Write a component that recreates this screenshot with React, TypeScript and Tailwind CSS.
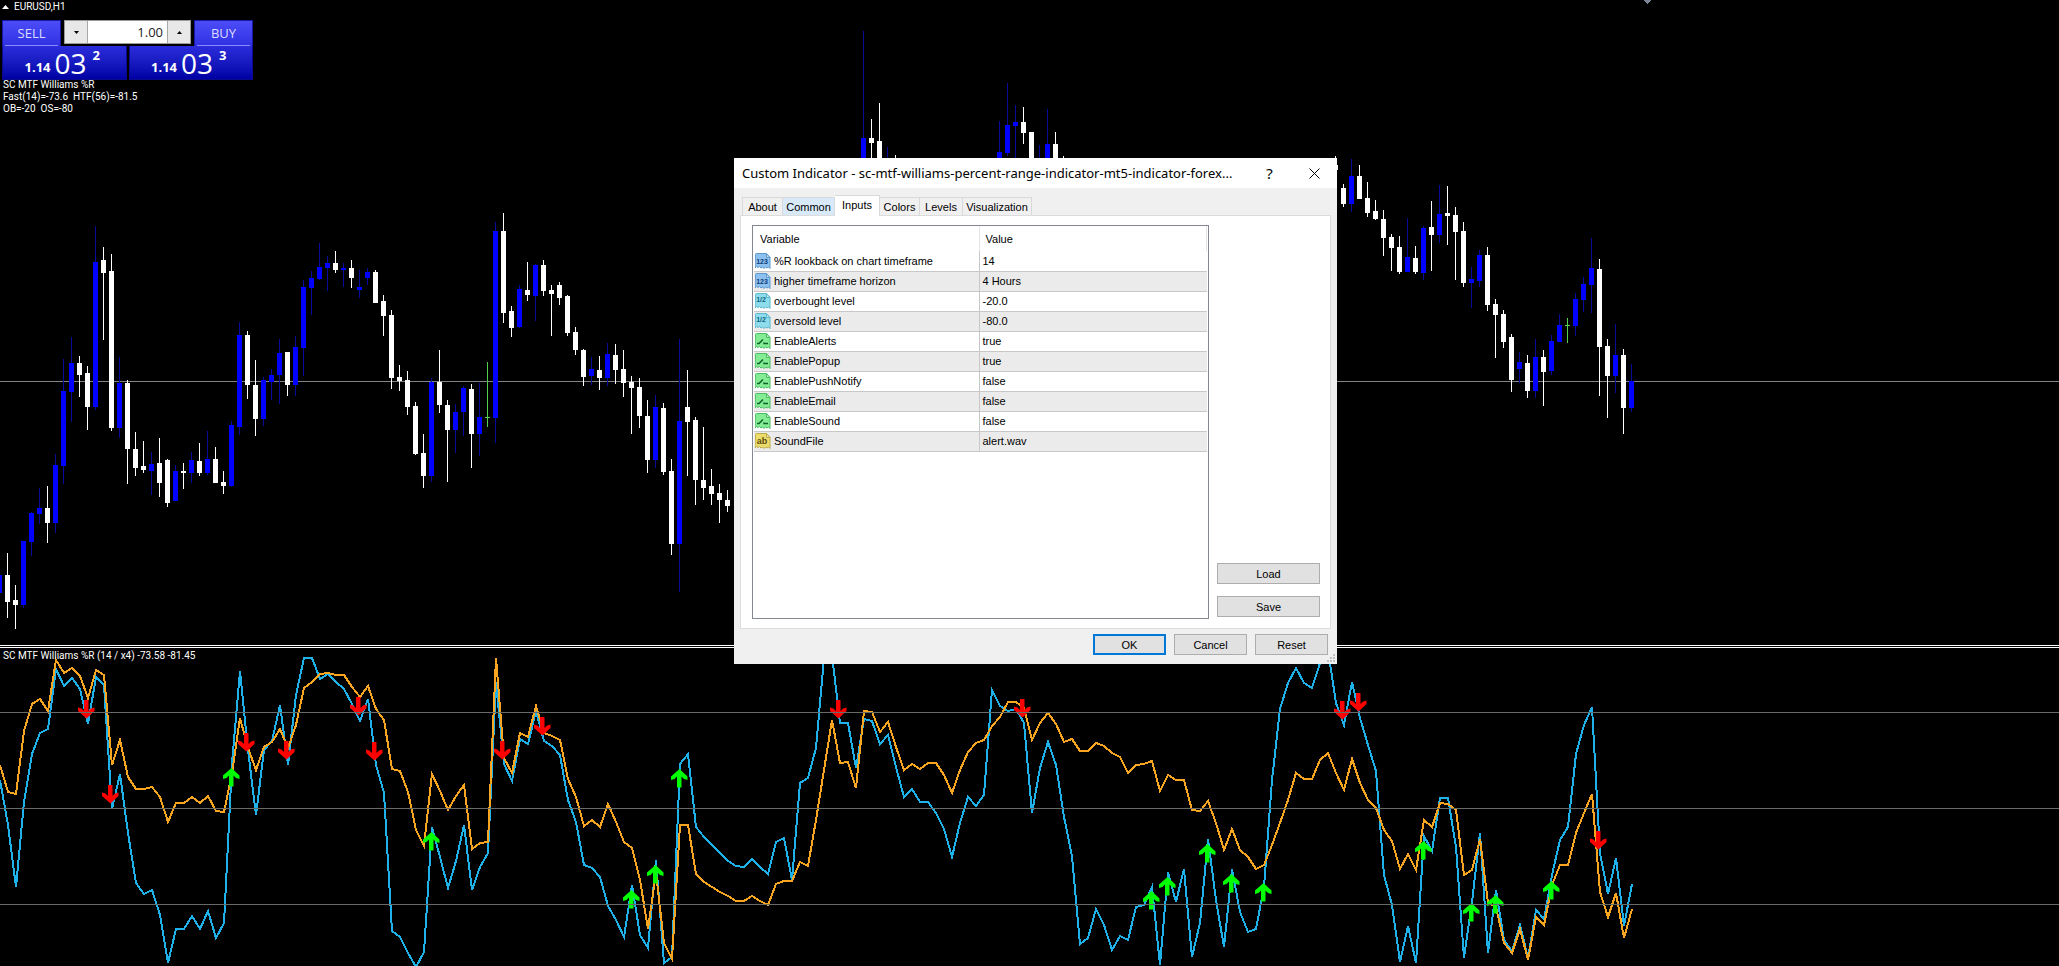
import type { ReactNode } from "react";
import clsx from "clsx";

type Kind = "up" | "down" | "doji";
// bar index, kind, high, body top, body bottom, low
type Candle = [number, Kind, number, number, number, number];

const STEP = 8;

const candles: Candle[] = [
  [-1, "up", 575, 575, 593, 593],
  [0, "down", 553, 575, 602, 618],
  [1, "down", 585, 600, 605, 629],
  [2, "up", 541, 541, 605, 608],
  [3, "up", 512, 513, 542, 556],
  [4, "up", 488, 508, 514, 524],
  [5, "down", 486, 508, 523, 543],
  [6, "up", 454, 465, 523, 533],
  [7, "up", 359, 391, 466, 484],
  [8, "up", 337, 363, 392, 422],
  [9, "down", 356, 363, 375, 397],
  [10, "down", 366, 373, 407, 430],
  [11, "up", 226, 262, 407, 410],
  [12, "down", 247, 260, 273, 340],
  [13, "down", 254, 271, 428, 431],
  [14, "up", 357, 383, 428, 438],
  [15, "down", 380, 383, 449, 484],
  [16, "down", 432, 449, 468, 476],
  [17, "down", 441, 466, 470, 473],
  [18, "up", 452, 464, 471, 495],
  [19, "down", 438, 463, 483, 497],
  [20, "down", 459, 460, 503, 507],
  [21, "up", 465, 471, 501, 501],
  [22, "down", 463, 471, 473, 489],
  [23, "up", 452, 460, 473, 483],
  [24, "down", 443, 461, 473, 476],
  [25, "up", 431, 459, 473, 475],
  [26, "down", 447, 459, 483, 483],
  [27, "down", 471, 482, 486, 494],
  [28, "up", 421, 425, 486, 487],
  [29, "up", 322, 335, 427, 435],
  [30, "down", 331, 335, 385, 399],
  [31, "down", 360, 385, 419, 436],
  [32, "up", 377, 380, 419, 426],
  [33, "up", 369, 375, 382, 400],
  [34, "up", 339, 353, 375, 404],
  [35, "down", 352, 352, 385, 396],
  [36, "up", 336, 347, 385, 396],
  [37, "up", 280, 287, 348, 376],
  [38, "up", 271, 278, 288, 315],
  [39, "up", 243, 267, 279, 280],
  [40, "up", 256, 263, 268, 291],
  [41, "down", 251, 263, 270, 273],
  [42, "up", 263, 268, 270, 287],
  [43, "down", 260, 268, 278, 288],
  [44, "up", 270, 287, 290, 298],
  [45, "up", 268, 272, 278, 285],
  [46, "down", 270, 272, 303, 303],
  [47, "down", 295, 301, 316, 336],
  [48, "down", 310, 315, 378, 389],
  [49, "down", 365, 377, 381, 391],
  [50, "down", 371, 380, 407, 415],
  [51, "down", 402, 406, 454, 455],
  [52, "down", 434, 453, 476, 488],
  [53, "up", 378, 382, 476, 482],
  [54, "down", 350, 382, 405, 413],
  [55, "down", 400, 405, 430, 482],
  [56, "up", 404, 412, 430, 453],
  [57, "up", 386, 388, 412, 436],
  [58, "down", 384, 389, 434, 468],
  [59, "up", 383, 417, 434, 456],
  [60, "doji", 362, 417, 418, 427],
  [61, "up", 222, 231, 418, 443],
  [62, "down", 213, 231, 313, 323],
  [63, "down", 306, 311, 328, 337],
  [64, "up", 285, 289, 327, 328],
  [65, "down", 262, 290, 295, 301],
  [66, "up", 264, 265, 296, 321],
  [67, "down", 260, 265, 291, 296],
  [68, "down", 285, 290, 294, 336],
  [69, "down", 282, 285, 298, 305],
  [70, "down", 295, 296, 333, 336],
  [71, "down", 327, 332, 350, 355],
  [72, "down", 349, 350, 377, 386],
  [73, "up", 357, 369, 376, 385],
  [74, "down", 356, 370, 378, 390],
  [75, "up", 343, 354, 378, 386],
  [76, "down", 344, 355, 370, 384],
  [77, "down", 350, 369, 383, 397],
  [78, "down", 376, 382, 388, 434],
  [79, "down", 378, 387, 416, 428],
  [80, "down", 400, 416, 460, 473],
  [81, "up", 395, 407, 460, 468],
  [82, "down", 403, 408, 472, 475],
  [83, "down", 459, 471, 544, 555],
  [84, "up", 339, 421, 544, 592],
  [85, "down", 370, 407, 422, 476],
  [86, "down", 417, 420, 480, 505],
  [87, "down", 427, 480, 488, 500],
  [88, "down", 469, 486, 494, 505],
  [89, "down", 484, 493, 500, 523],
  [90, "down", 490, 500, 506, 512],
  [107, "up", 31, 138, 170, 170],
  [108, "down", 119, 138, 143, 170],
  [109, "down", 103, 141, 170, 170],
  [110, "up", 147, 165, 170, 170],
  [111, "down", 155, 165, 170, 170],
  [124, "up", 121, 152, 170, 170],
  [125, "up", 83, 125, 153, 156],
  [126, "up", 105, 122, 126, 170],
  [127, "down", 107, 122, 133, 144],
  [128, "down", 132, 132, 170, 170],
  [129, "up", 145, 165, 170, 170],
  [130, "up", 109, 144, 170, 170],
  [131, "down", 132, 144, 170, 170],
  [132, "down", 156, 165, 170, 170],
  [166, "down", 156, 165, 170, 170],
  [167, "down", 184, 188, 204, 207],
  [168, "up", 159, 176, 204, 212],
  [169, "down", 165, 176, 199, 199],
  [170, "down", 182, 198, 213, 217],
  [171, "down", 200, 211, 219, 220],
  [172, "down", 210, 219, 238, 256],
  [173, "down", 234, 237, 248, 271],
  [174, "down", 236, 247, 272, 274],
  [175, "up", 218, 257, 272, 272],
  [176, "down", 246, 258, 272, 274],
  [177, "up", 226, 228, 273, 280],
  [178, "down", 201, 227, 235, 271],
  [179, "up", 185, 214, 235, 243],
  [180, "down", 186, 213, 216, 245],
  [181, "down", 207, 215, 232, 280],
  [182, "down", 222, 231, 283, 287],
  [183, "up", 267, 279, 283, 308],
  [184, "up", 250, 255, 281, 287],
  [185, "down", 247, 255, 305, 311],
  [186, "down", 299, 304, 315, 358],
  [187, "down", 310, 314, 342, 348],
  [188, "down", 334, 337, 380, 392],
  [189, "up", 352, 362, 369, 383],
  [190, "down", 355, 363, 391, 398],
  [191, "up", 339, 357, 391, 398],
  [192, "down", 350, 357, 372, 406],
  [193, "up", 335, 341, 371, 375],
  [194, "up", 314, 325, 342, 342],
  [195, "doji", 318, 325, 326, 343],
  [196, "up", 293, 299, 326, 336],
  [197, "up", 277, 284, 300, 312],
  [198, "up", 238, 268, 285, 313],
  [199, "down", 259, 269, 347, 396],
  [200, "down", 339, 346, 376, 418],
  [201, "up", 324, 355, 376, 393],
  [202, "down", 349, 355, 408, 434],
  [203, "up", 364, 381, 408, 412],
];

const bodyFill: Record<Kind, string> = {
  up: "fill-[#0000ff]",
  down: "fill-white",
  doji: "fill-[#4fd04f]",
};

const wickFill: Record<Kind, string> = {
  up: "fill-[#0a0a9a]",
  down: "fill-white",
  doji: "fill-[#4fd04f]",
};

// One value per bar, starting at bar -1
const PANE_TOP = 648;

const slow = [
  765, 792, 794, 731, 704, 699, 711, 660, 673, 668, 676, 698, 670, 675, 765, 740, 777, 789, 789, 787,
  797, 822, 803, 803, 797, 803, 796, 811, 812, 773, 718, 748, 770, 747, 742, 729, 748, 725, 688, 682,
  674, 673, 675, 675, 687, 697, 686, 709, 720, 769, 771, 792, 830, 846, 774, 791, 810, 796, 785, 849,
  843, 842, 658, 758, 773, 733, 737, 706, 733, 736, 740, 779, 797, 826, 820, 827, 804, 822, 842, 848,
  880, 929, 873, 943, 959, 825, 825, 874, 882, 887, 892, 896, 901, 901, 896, 901, 905, 884, 881, 881,
  862, 866, 820, 770, 720, 763, 762, 788, 711, 712, 732, 722, 747, 770, 764, 769, 763, 763, 775, 793,
  770, 752, 743, 740, 726, 717, 702, 702, 708, 740, 723, 713, 724, 742, 739, 751, 751, 743, 746, 753,
  757, 773, 765, 764, 761, 791, 775, 780, 780, 810, 811, 801, 823, 850, 829, 850, 857, 869, 865, 845,
  823, 800, 773, 779, 779, 760, 753, 773, 790, 759, 783, 800, 808, 830, 841, 869, 854, 870, 820, 827,
  803, 804, 810, 875, 870, 839, 903, 907, 943, 953, 929, 960, 917, 925, 885, 865, 865, 833, 813, 794,
  892, 917, 893, 938, 909,
];

const fast = [
  780, 825, 887, 802, 754, 733, 729, 669, 686, 678, 689, 724, 677, 685, 809, 774, 833, 883, 894, 890,
  915, 963, 929, 929, 916, 929, 911, 938, 923, 763, 671, 750, 815, 750, 741, 705, 765, 695, 658, 658,
  679, 674, 682, 689, 704, 721, 699, 765, 793, 931, 937, 953, 967, 952, 827, 857, 888, 861, 825, 890,
  867, 853, 682, 764, 781, 739, 744, 711, 741, 746, 755, 800, 822, 865, 868, 877, 906, 920, 937, 885,
  935, 948, 860, 963, 957, 764, 754, 827, 837, 845, 853, 861, 866, 867, 859, 867, 874, 842, 838, 880,
  783, 778, 748, 658, 655, 723, 723, 768, 719, 721, 744, 735, 767, 797, 789, 802, 802, 813, 829, 857,
  823, 797, 806, 795, 690, 706, 711, 709, 723, 813, 768, 742, 765, 817, 856, 944, 938, 909, 925, 950,
  936, 940, 907, 905, 887, 965, 872, 902, 869, 957, 923, 839, 900, 947, 869, 912, 932, 929, 887, 780,
  709, 683, 668, 683, 688, 663, 650, 703, 725, 682, 718, 745, 771, 875, 905, 962, 926, 963, 836, 851,
  798, 798, 847, 958, 902, 833, 953, 890, 940, 951, 925, 958, 910, 919, 875, 840, 827, 754, 725, 707,
  853, 894, 858, 926, 884,
];

// bar index, top edge
const sellArrows = [
  [10, 700], [13, 785], [30, 733], [35, 741], [44, 697], [46, 742], [62, 741],
  [67, 717], [104, 700], [127, 699], [167, 701], [169, 693], [199, 831],
];

const buyArrows = [
  [28, 768], [53, 832], [78, 890], [81, 865], [84, 769], [143, 891], [145, 877],
  [150, 844], [153, 874], [157, 883], [177, 841], [183, 903], [186, 895], [193, 881],
];

const levels = [712, 808, 904];

const toPoints = (values: number[]) =>
  values.map((y, i) => `${(i - 1) * STEP + 8},${y - PANE_TOP}`).join(" ");

function PriceChart() {
  return (
    <svg aria-hidden="true" className="block size-full" shapeRendering="crispEdges">
      <rect className="fill-[#808488]" height="1" width="100%" x="0" y="381" />
      {candles.map(([bar, kind, high, top, bottom, low]) => (
        <g key={bar}>
          <rect
            className={wickFill[kind]}
            height={low - high}
            width="1"
            x={bar * STEP + 7}
            y={high}
          />
          <rect
            className={bodyFill[kind]}
            height={bottom - top}
            width="5"
            x={bar * STEP + 5}
            y={top}
          />
        </g>
      ))}
      <path className="fill-[#7b8794]" d="M1643 0h9l-4.500 4z" />
    </svg>
  );
}

function IndicatorChart() {
  return (
    <svg aria-hidden="true" className="block size-full" shapeRendering="crispEdges">
      <polyline
        className="fill-none stroke-[#1fb2ea]"
        points={toPoints(fast)}
        strokeWidth="2"
      />
      <polyline
        className="fill-none stroke-[#f8a521]"
        points={toPoints(slow)}
        strokeWidth="2"
      />
      {sellArrows.map(([bar, top]) => (
        <path
          className="fill-[#ff0000]"
          d="M6 0h4.500v11l2.500-2.500L16.500 7.500v3.500l-8 7.500L0 11V7.500l3.500 1L6 11z"
          key={bar}
          shapeRendering="auto"
          transform={`translate(${bar * STEP - 2} ${top - PANE_TOP})`}
        />
      ))}
      {buyArrows.map(([bar, top]) => (
        <path
          className="fill-[#00ff00]"
          d="M6 18.500h4.500v-11l2.500 2.500 3.500 1V7.500L8.500 0 0 7.500V11l3.500-1L6 7.500z"
          key={bar}
          shapeRendering="auto"
          transform={`translate(${bar * STEP - 1} ${top - PANE_TOP})`}
        />
      ))}
      {levels.map((y) => (
        <rect
          className="fill-[#686c68]"
          height="1"
          key={y}
          width="100%"
          x="0"
          y={y - PANE_TOP}
        />
      ))}
    </svg>
  );
}

function Quote({ big, pip }: { big: string; pip: string }) {
  return (
    <button
      className="flex h-[34px] flex-1 items-end justify-center border border-[#0a0a8c] border-t-0 bg-linear-to-b from-[#2c2cdc] to-[#0000a4] pr-1 pb-1 text-white"
      type="button"
    >
      <span className="font-bold text-[13px] leading-4">1.14</span>
      <span className="ml-1 text-[28px] leading-6">{big}</span>
      <span className="ml-1.5 self-start font-bold text-[13px] leading-[18px]">{pip}</span>
    </button>
  );
}

function SideButton({ children }: { children: ReactNode }) {
  return (
    <button
      className="h-[26px] w-[59px] border border-[#1818a8] border-b-0 bg-linear-to-b from-[#4c4cf8] to-[#3030e2] px-0.5 text-[#dcdcff] text-[13px]"
      type="button"
    >
      <span className="block border-[#8c8cff] border-b leading-6">{children}</span>
    </button>
  );
}

function TradePanel() {
  return (
    <div className="relative z-10 w-[251px] bg-black font-['Open_Sans','Noto_Sans',sans-serif]">
      <div className="flex justify-between">
        <SideButton>SELL</SideButton>
        <div className="flex h-6 w-[127px] border border-[#9a9a9a] bg-[#e8e8e8]">
          <button
            aria-label="Decrease volume"
            className="flex w-[23px] items-center justify-center border-[#a8a8a8] border-r"
            type="button"
          >
            <svg aria-hidden="true" className="h-[3px] w-[5px]" viewBox="0 0 5 3">
              <path d="M0 0h5L2.500 3z" />
            </svg>
          </button>
          <input
            aria-label="Volume"
            className="min-w-0 flex-1 bg-white pr-1 text-right text-[#222] text-[13px]"
            defaultValue="1.00"
          />
          <button
            aria-label="Increase volume"
            className="flex w-[23px] items-center justify-center border-[#a8a8a8] border-l"
            type="button"
          >
            <svg aria-hidden="true" className="h-[3px] w-[5px]" viewBox="0 0 5 3">
              <path d="M0 3h5L2.500 0z" />
            </svg>
          </button>
        </div>
        <SideButton>BUY</SideButton>
      </div>
      <div className="flex gap-0.5">
        <Quote big="03" pip="2" />
        <Quote big="03" pip="3" />
      </div>
    </div>
  );
}

type IconKind = "int" | "double" | "bool" | "string";

const iconColors: Record<IconKind, { page: string; edge: string; ink: string }> = {
  int: { page: "fill-[#8cc0ee]", edge: "stroke-[#5e98cc]", ink: "fill-[#0c3c78]" },
  double: { page: "fill-[#8fdcec]", edge: "stroke-[#5cb8cc]", ink: "fill-[#0c6480]" },
  bool: { page: "fill-[#84ec94]", edge: "stroke-[#4cbc64]", ink: "stroke-[#0c6428]" },
  string: { page: "fill-[#ecdc6c]", edge: "stroke-[#bcac48]", ink: "fill-[#5c4c08]" },
};

const iconText: Partial<Record<IconKind, string>> = {
  int: "123",
  double: "1/2",
  string: "ab",
};

function TypeIcon({ kind }: { kind: IconKind }) {
  const { page, edge, ink } = iconColors[kind];
  return (
    <svg aria-hidden="true" className="h-4 w-4 shrink-0" viewBox="0 0 16 16">
      <path
        className={clsx(page, edge)}
        d="M.5 1.500q0-1 1-1H11l4 4v11l-1.500-1.500-1.500 1-1.500-1-1.500 1.500-1.500-1.500-1.500 1-1.500-1.500-1.500 1-1.500-1-1.500 1.500z"
      />
      <path className={clsx("fill-white/50", edge)} d="M11.500.5v4H15z" />
      {kind === "bool" ? (
        <path
          className={clsx("fill-none", ink)}
          d="M2 10.500h2l4-4M9 9.500v1h4"
          strokeWidth="1.500"
        />
      ) : (
        <text
          className={clsx(
            "font-['Liberation_Sans',sans-serif] font-bold",
            kind === "string" ? "text-[9px]" : "text-[7px]",
            ink
          )}
          textAnchor="middle"
          x={kind === "double" ? 6 : 7}
          y={kind === "double" ? 9 : 11}
        >
          {iconText[kind]}
        </text>
      )}
    </svg>
  );
}

const inputs: { name: string; value: string; kind: IconKind }[] = [
  { name: "%R lookback on chart timeframe", value: "14", kind: "int" },
  { name: "higher timeframe horizon", value: "4 Hours", kind: "int" },
  { name: "overbought level", value: "-20.0", kind: "double" },
  { name: "oversold level", value: "-80.0", kind: "double" },
  { name: "EnableAlerts", value: "true", kind: "bool" },
  { name: "EnablePopup", value: "true", kind: "bool" },
  { name: "EnablePushNotify", value: "false", kind: "bool" },
  { name: "EnableEmail", value: "false", kind: "bool" },
  { name: "EnableSound", value: "false", kind: "bool" },
  { name: "SoundFile", value: "alert.wav", kind: "string" },
];

function InputsTable() {
  return (
    <div className="flex-1 border border-[#828790] bg-white px-px">
      <table className="w-full table-fixed border-collapse text-left">
        <thead>
          <tr className="h-[25px]">
            <th className="w-[225px] border-[#e5e5e5] border-r px-1.5 font-normal">Variable</th>
            <th className="border-[#e5e5e5] border-r px-1.5 font-normal">Value</th>
          </tr>
        </thead>
        <tbody>
          {inputs.map(({ name, value, kind }) => (
            <tr className="h-5 border-[#c8c8c8] border-b even:bg-[#ebebeb]" key={name}>
              <td className="border-[#c8c8c8] border-r p-0">
                <div className="flex items-center gap-[3px] pl-px">
                  <TypeIcon kind={kind} />
                  {name}
                </div>
              </td>
              <td className="px-[3px] py-0">{value}</td>
            </tr>
          ))}
        </tbody>
      </table>
    </div>
  );
}

function DialogButton({
  children,
  wide,
  primary,
}: {
  children: ReactNode;
  wide?: boolean;
  primary?: boolean;
}) {
  return (
    <button
      className={clsx(
        "h-[21px] bg-[#e1e1e1]",
        wide ? "w-[103px]" : "w-[73px]",
        primary ? "border-2 border-[#0078d7]" : "border border-[#adadad]"
      )}
      type="button"
    >
      {children}
    </button>
  );
}

const tabs = [
  { label: "About", width: "w-[41px]" },
  { label: "Common", width: "w-[52px]" },
  { label: "Inputs", width: "w-[45px]" },
  { label: "Colors", width: "w-[40px]" },
  { label: "Levels", width: "w-[43px]" },
  { label: "Visualization", width: "w-[69px]" },
];

function IndicatorDialog() {
  return (
    <section
      aria-label="Custom Indicator"
      className="absolute top-[158px] left-[734px] z-20 flex h-[506px] w-[603px] flex-col bg-[#f0f0f0] font-['Liberation_Sans',Arial,sans-serif] text-[11px] text-black leading-[14px]"
      role="dialog"
    >
      <header className="flex h-[30px] items-center bg-white pl-2 font-['Noto_Sans','Open_Sans',sans-serif] text-[13px]">
        <h1 className="flex-1 whitespace-nowrap">
          Custom Indicator - sc-mtf-williams-percent-range-indicator-mt5-indicator-forex...
        </h1>
        <button className="w-[45px] text-[15px]" type="button">
          ?
        </button>
        <button aria-label="Close" className="flex w-[45px] justify-center" type="button">
          <svg
            aria-hidden="true"
            className="size-[11px] fill-none stroke-black"
            viewBox="0 0 11 11"
          >
            <path d="M.5.5l10 10M10.500.5l-10 10" />
          </svg>
        </button>
      </header>
      <div className="flex flex-1 flex-col px-1.5 pt-[7px]">
        <div className="z-10 -mb-px flex items-end pl-0.5" role="tablist">
          {tabs.map(({ label, width }) => {
            const active = label === "Inputs";
            return (
              <button
                aria-selected={active}
                className={clsx(
                  "whitespace-nowrap border-[#d9d9d9] border-t border-r first:border-l",
                  width,
                  active ? "h-[21px] bg-white pb-0.5" : "mb-px h-[18px]",
                  label === "Common" && "bg-[#d8eaf9]"
                )}
                key={label}
                role="tab"
                type="button"
              >
                {label}
              </button>
            );
          })}
        </div>
        <div className="flex flex-1 gap-2 border border-[#dcdcdc] bg-white py-[9px] pr-2.5 pl-[11px]">
          <InputsTable />
          <div className="flex flex-col justify-end gap-3 pb-0.5">
            <DialogButton wide>Load</DialogButton>
            <DialogButton wide>Save</DialogButton>
          </div>
        </div>
      </div>
      <footer className="relative flex justify-end gap-2 pt-[5px] pr-[9px] pb-[9px]">
        <DialogButton primary>OK</DialogButton>
        <DialogButton>Cancel</DialogButton>
        <DialogButton>Reset</DialogButton>
        <svg
          aria-hidden="true"
          className="absolute right-0.5 bottom-0.5 size-2 fill-[#bfbfbf]"
          viewBox="0 0 8 8"
        >
          <path d="M6 0h2v2H6zM3 3h2v2H3zM6 3h2v2H6zM0 6h2v2H0zM3 6h2v2H3zM6 6h2v2H6z" />
        </svg>
      </footer>
    </section>
  );
}

export default function App() {
  return (
    <main className="relative grid h-screen grid-rows-[645fr_auto_318fr] overflow-hidden bg-black font-[Roboto,'Open_Sans',sans-serif] text-[10px] text-white leading-3">
      <section aria-label="EURUSD,H1 chart" className="relative min-h-0 overflow-hidden">
        <PriceChart />
        <div className="absolute top-0 left-0 flex flex-col pl-0.5">
          <div className="flex h-5 items-start gap-[5px]">
            <svg aria-hidden="true" className="mt-[5px] h-1 w-[7px] fill-white" viewBox="0 0 7 4">
              <path d="M0 4h7L3.500 0z" />
            </svg>
            <span className="pt-px">EURUSD,H1</span>
          </div>
          <TradePanel />
          <div className="-mt-px whitespace-pre pl-px">
            <p>SC MTF Williams %R</p>
            <p>{"Fast(14)=-73.6  HTF(56)=-81.5"}</p>
            <p>{"OB=-20  OS=-80"}</p>
          </div>
        </div>
      </section>
      <div className="h-[3px] border-white border-y" />
      <section aria-label="Williams %R" className="relative min-h-0 overflow-hidden">
        <IndicatorChart />
        <p className="absolute top-0.5 left-[3px]">SC MTF Williams %R (14 / x4) -73.58 -81.45</p>
      </section>
      <IndicatorDialog />
    </main>
  );
}
